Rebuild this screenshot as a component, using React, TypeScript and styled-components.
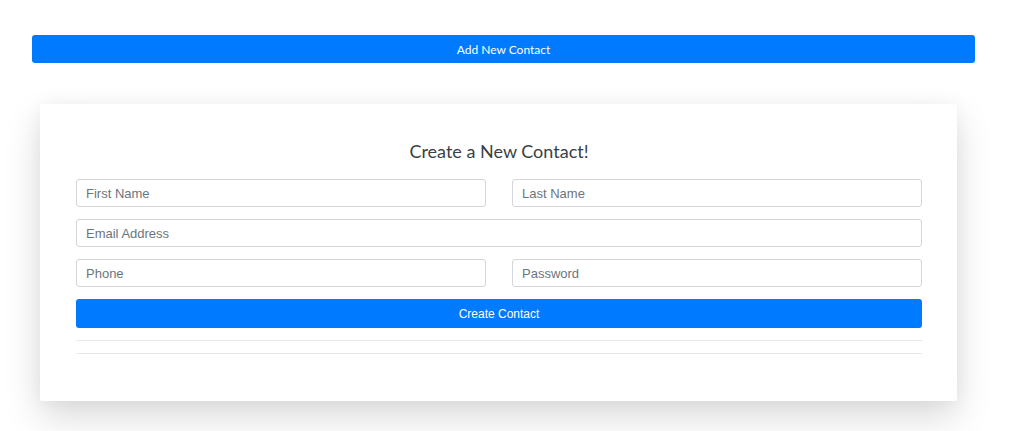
import React from 'react';
import styled, { createGlobalStyle } from 'styled-components';

const GlobalStyle = createGlobalStyle`
  body {
    margin: 0;
    background: #ffffff;
    font-family: Lato, "Liberation Sans", sans-serif;
  }
  * {
    box-sizing: border-box;
  }
`;

const Page = styled.div`
  width: 1024px;
  height: 431px;
  padding: 35px 49px 0 32px;
  display: flex;
  flex-direction: column;
`;

const PrimaryButton = styled.button<{ $font?: string; $height: number }>`
  width: 100%;
  height: ${(p) => p.$height}px;
  border: none;
  border-radius: 3px;
  background-color: #007bff;
  color: #ffffff;
  font-family: ${(p) => p.$font || 'Lato, "Liberation Sans", sans-serif'};
  font-size: 12px;
  cursor: pointer;
  padding: 0;
`;

const Card = styled.div`
  margin: 41px 18px 0 8px;
  width: 917px;
  height: 297px;
  background: #ffffff;
  border-radius: 2px;
  box-shadow: 0 16px 36px rgba(0, 0, 0, 0.15), 0 0 18px rgba(0, 0, 0, 0.04);
  padding: 36px 35px 0 36px;
  display: flex;
  flex-direction: column;
`;

const Title = styled.h2`
  margin: 0 0 17px;
  text-align: center;
  font-family: Lato, "Liberation Sans", sans-serif;
  font-weight: 400;
  font-size: 18px;
  line-height: 22px;
  color: #3a3f44;
`;

const Form = styled.form`
  display: flex;
  flex-direction: column;
  gap: 12px;
`;

const Row = styled.div`
  display: flex;
  gap: 26px;
`;

const Input = styled.input`
  flex: 1;
  min-width: 0;
  height: 28px;
  border: 1px solid #d3d7db;
  border-radius: 3px;
  padding: 0 9px;
  font-family: "Liberation Sans", Arial, sans-serif;
  font-size: 13px;
  color: #495057;
  background: #ffffff;
  &::placeholder {
    color: #6c757d;
  }
`;

const Divider = styled.hr<{ $top: number }>`
  margin: ${(p) => p.$top}px 0 0;
  border: none;
  border-top: 1px solid #e6e8ea;
  height: 0;
`;

const App: React.FC = () => {
  return (
    <>
      <GlobalStyle />
      <Page>
        <PrimaryButton $height={28}>Add New Contact</PrimaryButton>
        <Card>
          <Title>Create a New Contact!</Title>
          <Form onSubmit={(e) => e.preventDefault()}>
            <Row>
              <Input placeholder="First Name" />
              <Input placeholder="Last Name" />
            </Row>
            <Row>
              <Input placeholder="Email Address" />
            </Row>
            <Row>
              <Input placeholder="Phone" />
              <Input type="password" placeholder="Password" />
            </Row>
            <PrimaryButton type="submit" $height={29} $font='"Liberation Sans", Arial, sans-serif'>
              Create Contact
            </PrimaryButton>
          </Form>
          <Divider $top={12} />
          <Divider $top={12} />
        </Card>
      </Page>
    </>
  );
};

export default App;
